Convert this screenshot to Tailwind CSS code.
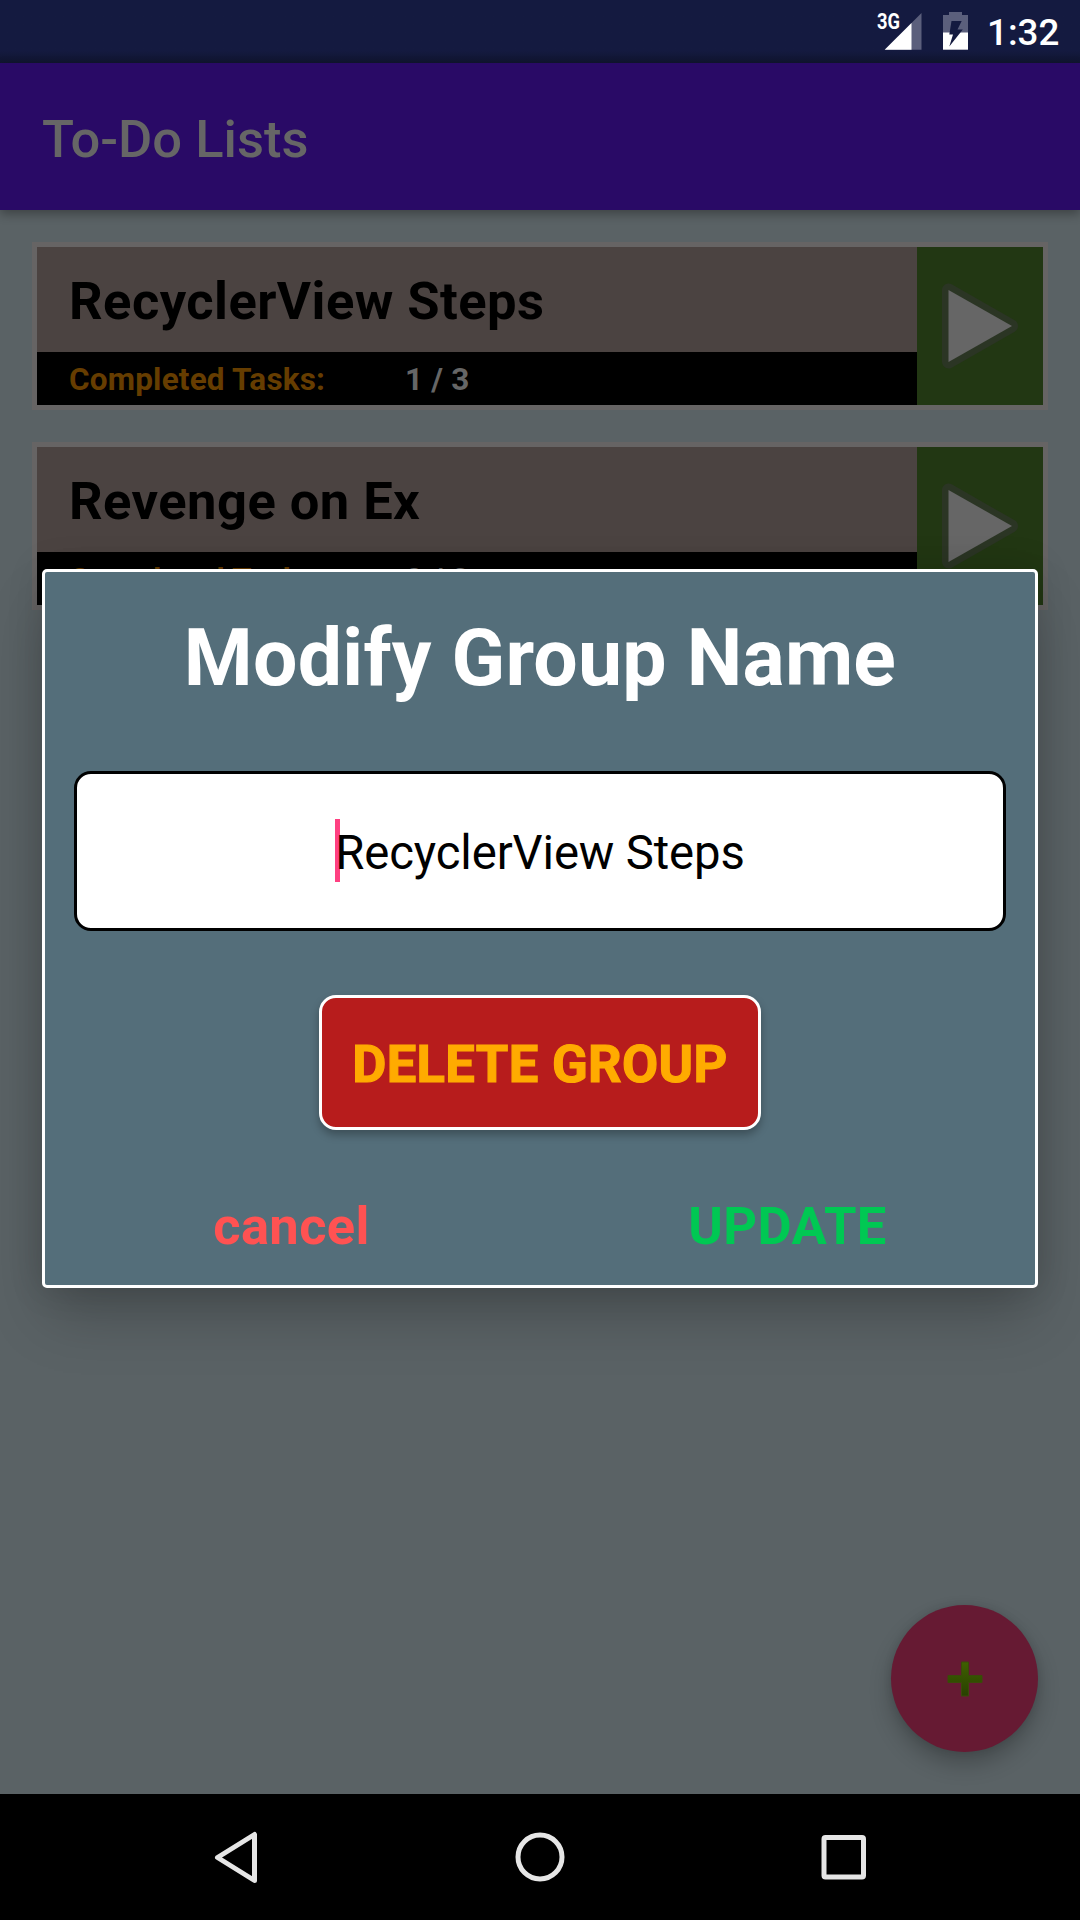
<!DOCTYPE html>
<html lang="en">
<head>
<meta charset="utf-8">
<title>To-Do Lists</title>
<script src="https://cdn.jsdelivr.net/npm/@tailwindcss/browser@4"></script>
</head>
<body class="relative flex h-[1920px] w-[1080px] flex-col overflow-hidden bg-[#5a6265] font-['Roboto',sans-serif]">
  <!-- Status bar -->
  <div class="flex h-[63px] shrink-0 items-center justify-end bg-linear-to-b from-[#141a40] from-80% to-[#10152f] pr-[21px] text-white">
    <svg class="h-[63px] w-[110px]" viewBox="877 0 110 63">
      <path d="M921.5 13V49.7H884.7Z" fill="#5b5f7c"/>
      <path d="M911.5 23V49.7H884.7Z" fill="#fff"/>
      <text x="877" y="29" font-size="21.5" font-weight="700" fill="#fff" textLength="23" lengthAdjust="spacingAndGlyphs">3G</text>
      <path d="M943 15H949V12H962V15H968V33H943Z" fill="#5b5f7c"/>
      <path d="M943 32.5H968V49.7H943Z" fill="#fff"/>
      <path d="M951.5 21H961.7L957.5 29.5H962.8L949.3 46.5L953 34.5H949.3Z" fill="#141a40"/>
    </svg>
    <span class="w-[72px] pt-[4px] text-right text-[36.75px] leading-none font-medium whitespace-nowrap">1:32</span>
  </div>
  <!-- App bar -->
  <header class="z-10 flex h-[147px] shrink-0 items-center bg-[#290a66] pt-[5px] pl-[42px] shadow-[0_4px_10px_rgba(0,0,0,.32)]">
    <h1 class="text-[52.5px] leading-none font-medium text-[#666]">To-Do Lists</h1>
  </header>
  <!-- Groups -->
  <main class="flex grow flex-col gap-8 px-8 pt-8">
    <section class="flex h-[168px] border-5 border-[#666464]">
      <div class="flex grow flex-col">
        <h2 class="flex h-[105px] items-center bg-[#4b4341] pt-[3px] pl-8 text-[52.5px] leading-none font-bold tracking-[0.45px] text-black">RecyclerView Steps</h2>
        <div class="flex h-[53px] items-center bg-black pt-[3px] pl-8 text-[31.5px] leading-none font-bold tracking-[0.18px]">
          <span class="w-[336px] text-[#663d00]">Completed Tasks:</span>
          <span class="text-[#666]">1 / 3</span>
        </div>
      </div>
      <div class="w-[126px] bg-[#223713]">
        <svg class="h-[158px] w-[126px]" viewBox="0 0 126 158">
          <path d="M31.5 43V115L94.5 79Z" fill="#2b3524" stroke="#2b3524" stroke-width="13" stroke-linejoin="round"/>
          <path d="M31.5 43V115L95 79Z" fill="#666"/>
        </svg>
      </div>
    </section>
    <section class="flex h-[168px] border-5 border-[#666464]">
      <div class="flex grow flex-col">
        <h2 class="flex h-[105px] items-center bg-[#4b4341] pt-[3px] pl-8 text-[52.5px] leading-none font-bold tracking-[0.45px] text-black">Revenge on Ex</h2>
        <div class="flex h-[53px] items-center bg-black pt-[3px] pl-8 text-[31.5px] leading-none font-bold tracking-[0.18px]">
          <span class="w-[336px] text-[#663d00]">Completed Tasks:</span>
          <span class="text-[#666]">0 / 2</span>
        </div>
      </div>
      <div class="w-[126px] bg-[#223713]">
        <svg class="h-[158px] w-[126px]" viewBox="0 0 126 158">
          <path d="M31.5 43V115L94.5 79Z" fill="#2b3524" stroke="#2b3524" stroke-width="13" stroke-linejoin="round"/>
          <path d="M31.5 43V115L95 79Z" fill="#666"/>
        </svg>
      </div>
    </section>
  </main>
  <!-- Add button -->
  <button class="absolute top-[1605px] left-[891px] flex size-[147px] items-center justify-center rounded-full bg-[#661a33] shadow-[0_12px_22px_rgba(0,0,0,.24),0_0_8px_rgba(0,0,0,.1)]">
    <svg class="size-[36px]" viewBox="0 0 36 36">
      <defs><linearGradient id="plus" x1="0" y1="0" x2="0" y2="1"><stop offset="0" stop-color="#3f6000"/><stop offset="1" stop-color="#284000"/></linearGradient></defs>
      <path d="M14.5 1H21.5V14.5H35V21.5H21.5V35H14.5V21.5H1V14.5H14.5Z" fill="url(#plus)" stroke="#3a4a0a" stroke-width="1" stroke-linejoin="round"/>
    </svg>
  </button>
  <!-- Navigation bar -->
  <nav class="h-[126px] shrink-0 bg-black">
    <svg class="h-[126px] w-[1080px]" viewBox="0 1794 1080 126" fill="none" stroke="#e6e6e6" stroke-width="5" stroke-linejoin="round">
      <path d="M254.5 1834.5V1880.5L217.5 1857.5Z"/>
      <circle cx="540" cy="1857" r="22"/>
      <rect x="824" y="1837.5" width="39.5" height="39.5" rx="1.5"/>
    </svg>
  </nav>
  <!-- Dialog -->
  <div role="dialog" class="absolute top-[569px] left-[42px] z-20 flex h-[719px] w-[996px] flex-col items-center rounded-[5px] border-3 border-white bg-[#546e7a] shadow-[0_32px_56px_-6px_rgba(0,0,0,.22),0_0_36px_rgba(0,0,0,.14)]">
    <h2 class="mt-[47px] text-[78.75px] leading-[79px] font-bold tracking-[0.24px] whitespace-nowrap text-white">Modify Group Name</h2>
    <div class="mt-[73px] flex h-[160px] w-[932px] items-center justify-center rounded-[17px] border-3 border-black bg-white pt-[6px]">
      <span class="relative text-[47.25px] leading-none tracking-[-0.12px] text-black"><i class="absolute -top-[11px] left-0 h-[63px] w-[5px] bg-[#ff4081]"></i><span class="relative">RecyclerView Steps</span></span>
    </div>
    <button class="mt-[64px] flex h-[135px] w-[442px] items-center justify-center rounded-[17px] border-3 border-white bg-[#b71c1c] pt-[4px] text-[52.5px] leading-none font-bold tracking-[0.35px] text-[#ffab00] shadow-[0_5px_8px_rgba(0,0,0,.28)] [-webkit-text-stroke:1.2px_#ffab00]">DELETE GROUP</button>
    <div class="mt-[70px] grid w-full grid-cols-2 text-center text-[52.5px] leading-[53px] font-bold tracking-[0.35px]">
      <span class="pr-[2px] text-[#ff5252]">cancel</span>
      <span class="text-[#00c853]">UPDATE</span>
    </div>
  </div>
</body>
</html>
